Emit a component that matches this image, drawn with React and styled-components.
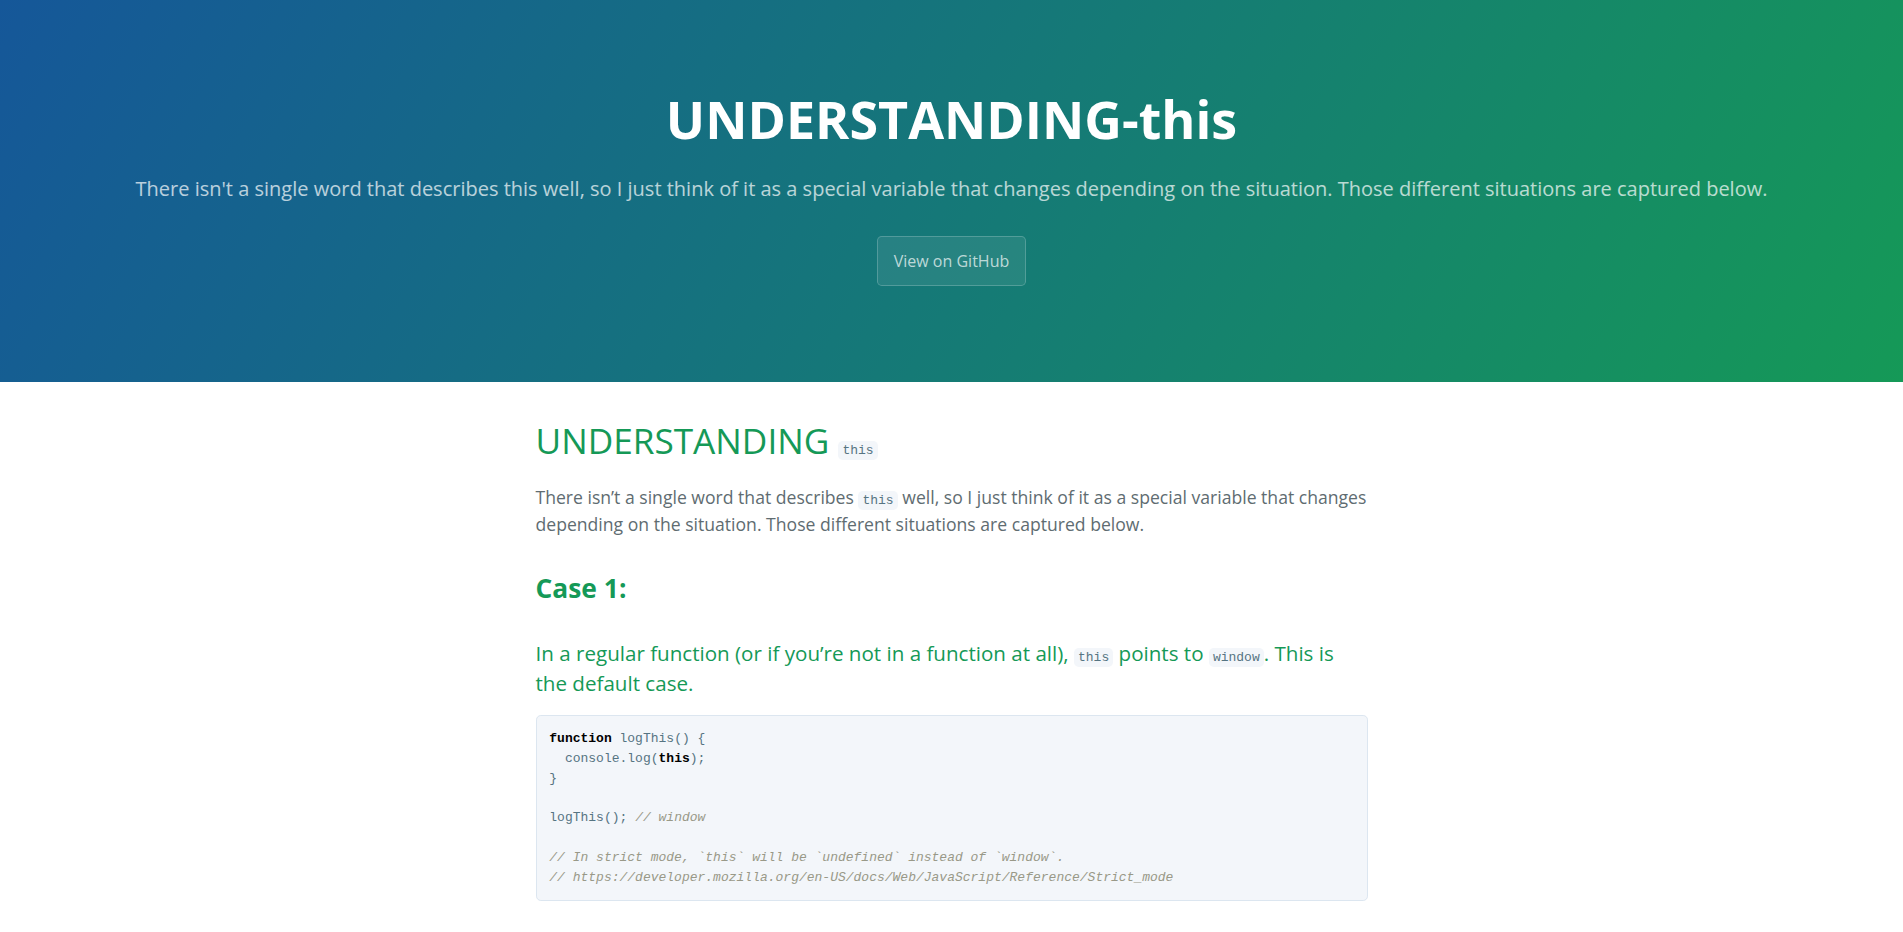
import React from 'react'
import styled, { createGlobalStyle } from 'styled-components'

const GlobalStyle = createGlobalStyle`
  html, body {
    margin: 0;
    padding: 0;
  }

  body {
    font-family: "Open Sans", "Helvetica Neue", Helvetica, Arial, sans-serif;
    font-size: 16px;
    line-height: 1.5;
    color: #606c71;
    background: #ffffff;
  }
`

const PageHeader = styled.section`
  color: #ffffff;
  text-align: center;
  background-color: #159957;
  background-image: linear-gradient(120deg, #155799, #159957);
  padding: 5rem 6rem;
`

const ProjectName = styled.h1`
  margin: 0 0 0.1rem;
  font-size: 3.25rem;
  font-weight: bold;
  line-height: 1.5;
`

const ProjectTagline = styled.h2`
  margin: 1rem 0 2rem;
  font-size: 1.25rem;
  font-weight: normal;
  line-height: 1.5;
  opacity: 0.7;
`

const Btn = styled.a`
  display: inline-block;
  margin-bottom: 1rem;
  padding: 0.75rem 1rem;
  font-size: 1rem;
  color: rgba(255, 255, 255, 0.7);
  text-decoration: none;
  background-color: rgba(255, 255, 255, 0.08);
  border: 1px solid rgba(255, 255, 255, 0.2);
  border-radius: 0.3rem;
  cursor: pointer;

  &:hover {
    color: rgba(255, 255, 255, 0.8);
    background-color: rgba(255, 255, 255, 0.2);
  }
`

const MainContent = styled.section`
  max-width: 64rem;
  box-sizing: border-box;
  margin: 0 auto;
  padding: 2rem 6rem;
  font-size: 1.1rem;
  word-wrap: break-word;
`

const Heading = styled.h1`
  margin: ${({ top }) => top} 0 1rem;
  color: #159957;
  font-weight: normal;
  line-height: ${({ lh }) => lh || 1.5};
  font-size: ${({ size }) => size};

  strong {
    font-weight: bold;
  }
`

const Paragraph = styled.p`
  margin: 1em 0;
`

const Code = styled.code`
  padding: 2px 4px;
  font-family: "Liberation Mono", Consolas, Menlo, Courier, monospace;
  font-size: 13px;
  color: #567482;
  background-color: #f3f6fa;
  border-radius: 0.3rem;
`

const Pre = styled.pre`
  margin: 0 0 1rem;
  padding: 0.85rem 0.8rem 0.75rem;
  font-family: "Liberation Mono", Consolas, Menlo, Courier, monospace;
  font-size: 13px;
  line-height: 19.8px;
  color: #567482;
  background-color: #f3f6fa;
  border: 1px solid #dce6f0;
  border-radius: 0.3rem;
  overflow: auto;
  white-space: pre;

  & > code {
    display: block;
    font: inherit;
    line-height: inherit;
  }
`

const Keyword = styled.span`
  color: #000000;
  font-weight: bold;
`

const Comment = styled.span`
  color: #999988;
  font-style: italic;
`

const App = () => {
  return (
    <>
      <GlobalStyle />
      <PageHeader>
        <ProjectName>UNDERSTANDING-this</ProjectName>
        <ProjectTagline>
          There isn't a single word that describes this well, so I just think of it as a special variable that changes depending on the situation. Those different situations are captured below.
        </ProjectTagline>
        <Btn>View on GitHub</Btn>
      </PageHeader>

      <MainContent>
        <Heading as="h1" top="0" size="2em">
          UNDERSTANDING <Code>this</Code>
        </Heading>
        <Paragraph>
          There isn’t a single word that describes <Code>this</Code> well, so I just think of it as a special variable that changes depending on the situation. Those different situations are captured below.
        </Paragraph>

        <Heading as="h2" top="2rem" size="1.5em">
          <strong>Case 1:</strong>
        </Heading>

        <Heading as="h3" top="30px" lh="1.45" size="1.17em">
          In a regular function (or if you’re not in a function at all), <Code>this</Code> points to <Code>window</Code>. This is the default case.
        </Heading>

        <Pre>
          <code>
            <Keyword>function</Keyword> logThis() {'{'}{'\n'}
            {'  '}console.log(<Keyword>this</Keyword>);{'\n'}
            {'}'}{'\n'}
            {'\n'}
            logThis(); <Comment>// window</Comment>{'\n'}
            {'\n'}
            <Comment>// In strict mode, `this` will be `undefined` instead of `window`.</Comment>{'\n'}
            <Comment>// https://developer.mozilla.org/en-US/docs/Web/JavaScript/Reference/Strict_mode</Comment>
          </code>
        </Pre>
      </MainContent>
    </>
  )
}

export default App
